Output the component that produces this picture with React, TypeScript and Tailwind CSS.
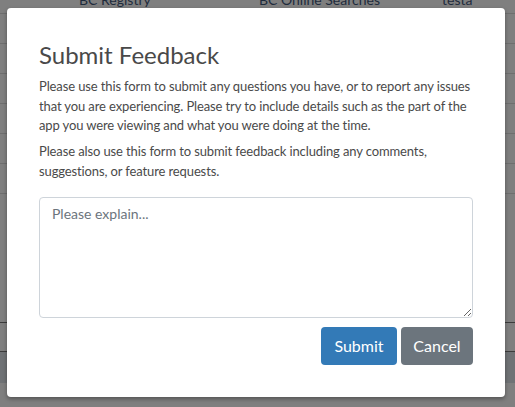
import React from "react";

const font = { fontFamily: "Lato, 'Open Sans', sans-serif" };

export default function App() {
  const rows = Array.from({ length: 7 });
  return (
    <div className="relative w-[515px] h-[407px] overflow-hidden bg-[#7f7f7f]" style={font}>
      {/* background page (dimmed) */}
      <div className="flex flex-col">
        <div className="h-[20px] border-b border-[#6e6e6e] flex items-end text-[14px] text-[#1e2b3c] leading-[14px] -mt-[6px] pb-[6px]">
          <span className="ml-[79px] w-[180px]">BC Registry</span>
          <span className="w-[183px]">BC Online Searches</span>
          <span>testa</span>
        </div>
        {rows.slice(1).map((_, i) => (
          <div key={i} className="h-[30px] border-b border-[#6e6e6e]" />
        ))}
        <div className="h-[129px] border-b border-[#3c3c3c]" />
        <div className="h-[29px] border-b border-[#3c3c3c]" />
        <div className="h-[31px] bg-[#6f7275]" />
      </div>

      {/* modal */}
      <div className="absolute left-[7px] top-[8px] w-[498px] h-[389px] bg-white rounded-[4px] shadow-[0_2px_4px_rgba(0,0,0,0.35)] px-[32px] pt-[31px] pb-[32px] flex flex-col">
        <h1 className="text-[24px] leading-[32px] text-[#494949] font-normal mb-[6px]">Submit Feedback</h1>
        <p className="text-[13px] leading-[19.5px] text-[#4a4a4a] mb-[6.5px] tracking-[-0.12px] -mr-[4px]">
          Please use this form to submit any questions you have, or to report any issues that you are experiencing. Please try to include details such as the part of the app you were viewing and what you were doing at the time.
        </p>
        <p className="text-[13px] leading-[19.5px] text-[#4a4a4a] tracking-[-0.12px] -mr-[4px]">
          Please also use this form to submit feedback including any comments, suggestions, or feature requests.
        </p>
        <textarea
          className="mt-[16px] h-[121px] w-full border border-[#ced4da] rounded-[4px] px-[12px] py-[6px] text-[14px] leading-[20px] text-[#495057] placeholder:text-[#6c757d] resize-y outline-none"
          placeholder="Please explain..."
          style={font}
        />
        <div className="flex justify-end gap-[4px] mt-[9px]">
          <button className="h-[38px] w-[76px] rounded-[4px] bg-[#337ab7] text-white text-[16px]" style={font}>Submit</button>
          <button className="h-[38px] w-[72px] rounded-[4px] bg-[#6c757d] text-white text-[16px]" style={font}>Cancel</button>
        </div>
      </div>
    </div>
  );
}
